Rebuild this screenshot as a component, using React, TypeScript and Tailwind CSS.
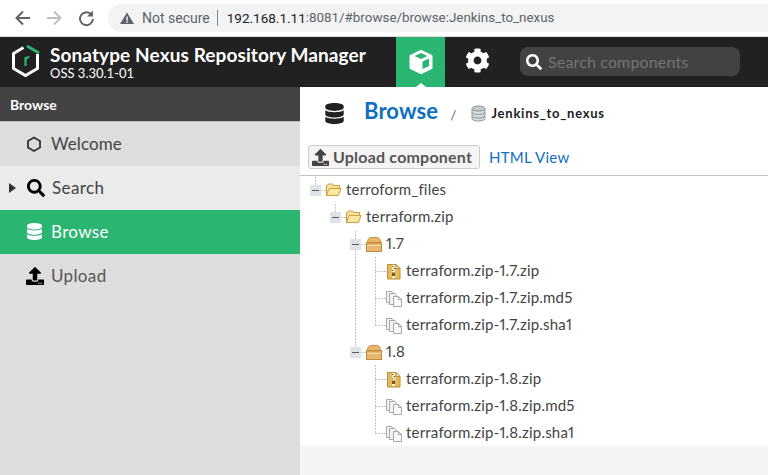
import React from "react";
import { FaCog, FaSearch, FaDatabase, FaUpload } from "react-icons/fa";

const font = "font-['Lato','Open_Sans',sans-serif]";

function Folder() {
  return (
    <g>
      <path d="M1.5 14.500V4.500h1l1-1.500h4l1 1.500h6v3" fill="#f9e3a3" stroke="#c99a3f" />
      <path d="M1.500 14.500l2.500-7h12l-2.500 7z" fill="#fbe6a2" stroke="#cf9f43" />
    </g>
  );
}
function Box() {
  return (
    <g>
      <path d="M1.500 6.500q0-5 4-5h5q4 0 4 5v2h-13z" fill="#e9b56a" stroke="#c59247" />
      <rect x="0.500" y="6.500" width="15" height="9" fill="#e8b66c" stroke="#c08b40" />
      <path d="M1.500 9.500h13" stroke="#f7deae" />
      <path d="M1.500 7.500h13" stroke="#d9a255" />
    </g>
  );
}
function Zip() {
  return (
    <g>
      <path d="M0.500 0.500h8.500l4 4v10.500h-12.500z" fill="#e5b95c" stroke="#b98f3c" />
      <path d="M9 0.500v4h4z" fill="#f8edc8" stroke="#b98f3c" />
      <rect x="5" y="1" width="3" height="13" fill="#fff8df" />
      <path d="M5 2.500h1.500M6.500 4.500h1.500M5 6.500h1.500" stroke="#7a5a20" />
      <rect x="5" y="8.500" width="3" height="3.500" fill="#7a5a20" />
    </g>
  );
}
function Files() {
  return (
    <g fill="#f3f3f3" stroke="#a8a8a8">
      <path d="M0.500 0.500h5.500l1 1v10h-6.500z" />
      <path d="M3.500 2.500h5.500l1 1v10h-6.500z" />
      <path d="M7.500 5.500h5l3 3v7h-8z" fill="#f8f8f8" />
      <path d="M12.500 5.500v3h3" fill="none" />
    </g>
  );
}

type Seg = [number, number, number, number];
type Kind = "folder" | "box" | "zip" | "files";
function Row({ w, iconX, kind, box, segs, label }: { w: number; iconX: number; kind: Kind; box?: number; segs: Seg[]; label: string }) {
  const dy = kind === "folder" ? 5 : kind === "box" ? 6 : 7;
  return (
    <div className="flex h-[27px] items-center">
      <svg width={w} height={27} className="shrink-0">
        {segs.map(([a, b, c, d], i) => (
          <line key={i} x1={a + 0.5} y1={b + 0.5} x2={c + 0.5} y2={d + 0.5} stroke="#8a8a8a" strokeDasharray="1 2" />
        ))}
        {box !== undefined && (
          <g>
            <rect x={box} y={9} width={11} height={11} fill="#dfe2e6" />
            <rect x={box + 2} y={14} width={7} height={1} fill="#5a5a5a" />
          </g>
        )}
        <g transform={`translate(${iconX} ${dy})`}>
          {kind === "folder" && <Folder />}
          {kind === "box" && <Box />}
          {kind === "zip" && <Zip />}
          {kind === "files" && <Files />}
        </g>
      </svg>
      <span className="text-[15px] leading-none tracking-[0.2px] text-[#444444] proportional-nums">{label}</span>
    </div>
  );
}

const v355: Seg = [55, 0, 55, 27];

function TreeLeaf({ label, kind, last, outer }: { label: string; kind: "zip" | "files"; last?: boolean; outer?: boolean }) {
  const segs: Seg[] = [
    [75, 0, 75, last ? 14 : 27],
    [75, 14, 85, 14],
  ];
  if (outer) segs.push(v355);
  return <Row w={106} iconX={kind === "zip" ? 87 : 86} kind={kind} segs={segs} label={label} />;
}

export default function App() {
  return (
    <div className={`flex h-[475px] w-[768px] flex-col overflow-hidden bg-white ${font}`}>
      {/* Browser bar */}
      <div className="flex h-[36px] shrink-0 items-center bg-white font-['Roboto',sans-serif]">
        <div className="flex w-[108px] shrink-0 items-center">
          <svg width="108" height="36" viewBox="0 0 108 36">
            <path d="M30 18H17M23 11.500L16.500 18l6.500 6.500" fill="none" stroke="#5f6368" strokeWidth="2" />
            <path d="M47 18h13M54 11.500L60.500 18 54 24.500" fill="none" stroke="#bdc1c6" strokeWidth="2" />
            <path d="M91.500 14.500A6.500 6.500 0 1 0 93 19" fill="none" stroke="#5f6368" strokeWidth="2" />
            <path d="M93 10.500v6h-6z" fill="#5f6368" />
          </svg>
        </div>
        <div className="flex h-[28px] flex-1 items-center rounded-l-full bg-[#f1f3f4] pl-[12px] text-[14px]">
          <svg width="16" height="16" viewBox="0 0 16 16" className="shrink-0">
            <path d="M7 2.500L14 14H0z" fill="#5f6368" />
            <rect x="6.300" y="6.500" width="1.500" height="4" fill="#f1f3f4" />
            <rect x="6.300" y="11.300" width="1.500" height="1.500" fill="#f1f3f4" />
          </svg>
          <span className="ml-[6px] text-[#5f6368]">Not secure</span>
          <span className="ml-[7px] mr-[9px] h-[16px] w-px bg-[#80868b]" />
          <span className="text-[13.5px] text-[#202124]">192.168.1.11</span>
          <span className="text-[13.4px] text-[#5f6368]">:8081/#browse/browse:Jenkins_to_nexus</span>
        </div>
      </div>
      <div className="h-px shrink-0 bg-[#dadce0]" />

      {/* Nexus header */}
      <div className="flex h-[50px] shrink-0 items-stretch bg-[#212121]">
        <div className="flex w-[396px] shrink-0 items-center">
          <svg width="50" height="50" viewBox="0 0 50 50" className="shrink-0">
            <path d="M23.500 10.500L13.500 16.500V31.500L25.500 38.500L37.500 31.500V17" fill="none" stroke="#fff" strokeWidth="3" />
            <path d="M27 9L39 16" fill="none" stroke="#2ab573" strokeWidth="3" />
            <path d="M25.500 29v-9M25.500 23q.5-3 4-3" fill="none" stroke="#2ab573" strokeWidth="2.200" />
          </svg>
          <div className="flex flex-col text-white">
            <span className="text-[19px] font-bold leading-[23px] tracking-[0.1px]">Sonatype Nexus Repository Manager</span>
            <span className="text-[13px] leading-[15px]">OSS 3.30.1-01</span>
          </div>
        </div>
        <div className="relative flex w-[49px] shrink-0 items-center justify-center bg-[#2ab573]">
          <svg width="26" height="26" viewBox="0 0 26 26">
            <path d="M13 2L23.500 7v12L13 24 2.500 19V7z" fill="#fff" stroke="#fff" strokeWidth="2" strokeLinejoin="round" />
            <path d="M13 4l6.500 3L13 10 6.500 7z" fill="#2ab573" />
            <path d="M14.500 12.500l6.500-3V17l-6.500 3z" fill="#2ab573" />
          </svg>
          <div className="absolute bottom-0 left-1/2 h-0 w-0 -translate-x-1/2 border-x-[5px] border-b-[4px] border-x-transparent border-b-white" />
        </div>
        <div className="flex w-[66px] shrink-0 items-center justify-center">
          <FaCog className="-ml-[2px] -mt-[3px] text-[25px] text-white" />
        </div>
        <div className="flex items-center pl-[9px]">
          <div className="-mt-[1px] flex h-[29px] w-[220px] items-center rounded-[8px] bg-[#424242] pl-[6px]">
            <FaSearch className="text-[16px] text-white" />
            <span className="ml-[6px] text-[16px] tracking-[0.15px] text-[#757575]">Search components</span>
          </div>
        </div>
      </div>

      <div className="flex min-h-0 flex-1">
        {/* Sidebar */}
        <div className="flex w-[300px] shrink-0 flex-col bg-[#dddddd]">
          <div className="flex h-[34px] shrink-0 items-center bg-[#424242] pl-[10px] text-[14px] font-bold text-white">Browse</div>
          <div className="h-px shrink-0 bg-[#bdbdbd]" />
          <div className="flex h-[44px] items-center pb-[1px] pl-[26px] text-[#444444]">
            <svg width="16" height="16" viewBox="0 0 16 16" className="shrink-0">
              <path d="M8 1.500L14 5v6.500L8 15 2 11.500V5z" fill="none" stroke="#333" strokeWidth="1.800" />
            </svg>
            <span className="ml-[9px] text-[17px] tracking-[0.1px]">Welcome</span>
          </div>
          <div className="relative flex h-[44px] items-center bg-[#ebebeb] pb-[1px] pl-[27px] text-[#444444]">
            <div className="absolute left-[9px] top-[17px] h-0 w-0 border-y-[5px] border-l-[7px] border-y-transparent border-l-[#333333]" />
            <FaSearch className="text-[18px] text-black" />
            <span className="ml-[7px] text-[17px] tracking-[0.4px]">Search</span>
          </div>
          <div className="flex h-[44px] items-center bg-[#2ab573] pb-[1px] pl-[26px] text-white">
            <FaDatabase className="text-[17px]" />
            <span className="ml-[8px] text-[17px] tracking-[0.35px]">Browse</span>
          </div>
          <div className="flex h-[44px] items-center pb-[1px] pl-[26px] text-[#555555]">
            <FaUpload className="text-[18px] text-black" />
            <span className="ml-[7px] text-[17px] tracking-[0.35px]">Upload</span>
          </div>
        </div>

        {/* Main */}
        <div className="flex min-w-0 flex-1 flex-col bg-[#f4f4f4]">
          <div className="bg-white">
            <div className="flex h-[52px] items-center pl-[24px]">
              <FaDatabase className="text-[21px] text-[#212121]" />
              <span className="mb-[5px] ml-[19px] text-[22px] font-bold tracking-[0.1px] text-[#0f6fc0]">Browse</span>
              <span className="ml-[12px] mt-[3px] text-[14px] text-[#666666]">/</span>
              <svg width="15" height="17" viewBox="0 0 15 17" className="ml-[14px] shrink-0">
                <path d="M1 3.500v10c0 1.500 3 2.500 6.500 2.500s6.500-1 6.500-2.500v-10" fill="#d5dadd" stroke="#8f979c" />
                <ellipse cx="7.500" cy="3.500" rx="6.500" ry="2.500" fill="#c3cbd0" stroke="#8f979c" />
                <path d="M1 7.500c1 1.500 3 2 6.500 2s5.500-.5 6.500-2M1 11c1 1.500 3 2 6.500 2s5.500-.5 6.500-2" fill="none" stroke="#8f979c" />
              </svg>
              <span className="ml-[6px] mt-[1px] text-[13px] font-bold tracking-[0.75px] text-[#212121]">Jenkins_to_nexus</span>
            </div>
            <div className="flex h-[36px] items-start pl-[8px] pt-[6px]">
              <div className="flex h-[24px] w-[172px] items-center rounded-[3px] border border-[#cccccc] bg-[#f4f4f4] pl-[3px]">
                <FaUpload className="text-[17px] text-[#444444]" />
                <span className="ml-[4px] text-[16px] font-bold tracking-[0.2px] text-[#555555]">Upload component</span>
              </div>
              <span className="ml-[9px] mt-[1px] text-[15px] tracking-[0.25px] text-[#0f6fc0]">HTML View</span>
            </div>
            <div className="h-px bg-[#c4c4c4]" />
            <div className="flex flex-col">
              <Row w={46} iconX={25} kind="folder" box={10} segs={[[15, 1, 15, 9], [21, 14, 25, 14]]} label="terroform_files" />
              <Row w={66} iconX={45} kind="folder" box={30} segs={[[35, 1, 35, 9], [41, 14, 45, 14]]} label="terraform.zip" />
              <Row w={86} iconX={66} kind="box" box={50} segs={[[55, 1, 55, 9], [55, 20, 55, 27], [61, 14, 65, 14]]} label="1.7" />
              <TreeLeaf label="terraform.zip-1.7.zip" kind="zip" outer />
              <TreeLeaf label="terraform.zip-1.7.zip.md5" kind="files" outer />
              <TreeLeaf label="terraform.zip-1.7.zip.sha1" kind="files" last outer />
              <Row w={86} iconX={66} kind="box" box={50} segs={[[55, 0, 55, 9], [61, 14, 65, 14]]} label="1.8" />
              <TreeLeaf label="terraform.zip-1.8.zip" kind="zip" />
              <TreeLeaf label="terraform.zip-1.8.zip.md5" kind="files" />
              <TreeLeaf label="terraform.zip-1.8.zip.sha1" kind="files" last />
            </div>
          </div>
        </div>
      </div>
    </div>
  );
}
